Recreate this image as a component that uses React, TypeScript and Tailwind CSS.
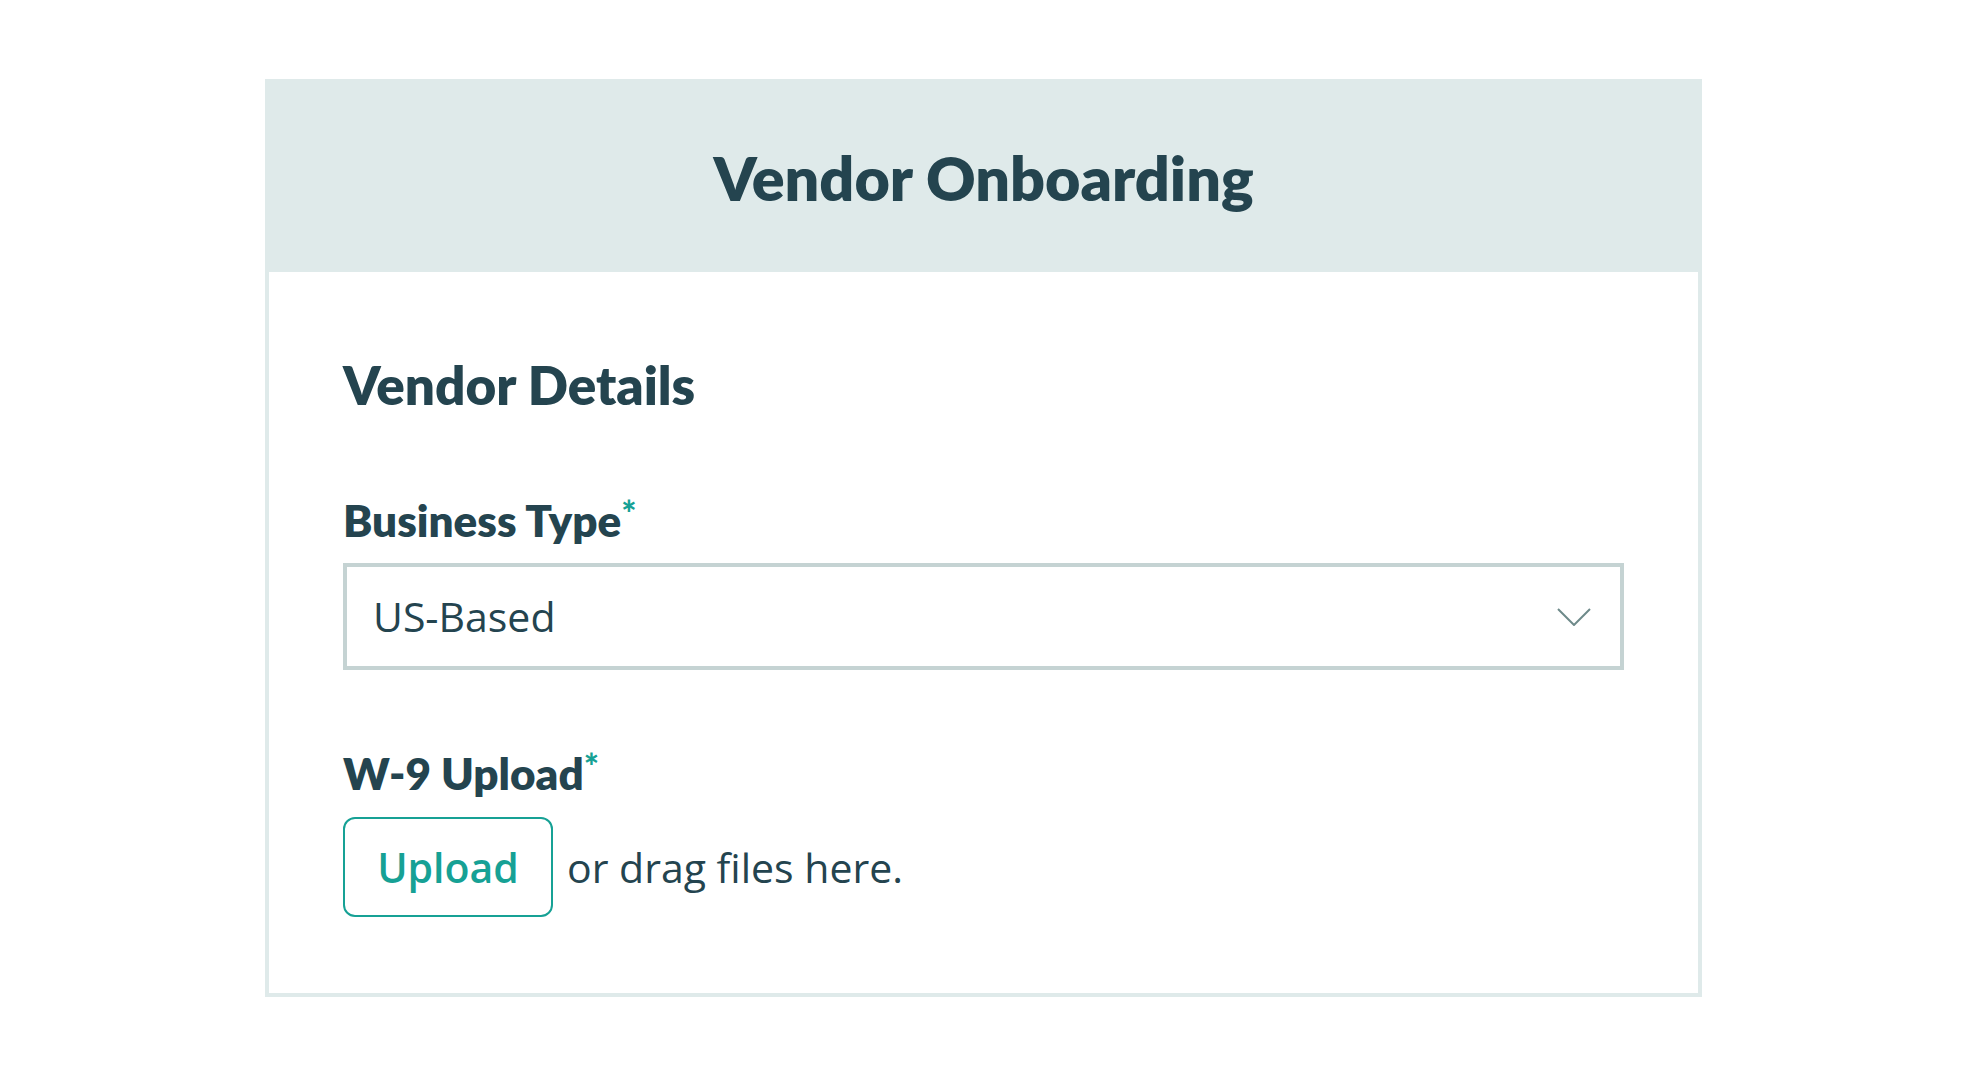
const dark = "text-[#24444f]";

const Label = ({ children }: { children: React.ReactNode }) => (
    <div className={`font-['Lato',sans-serif] text-[44px] font-extrabold leading-none ${dark}`}>
        {children}
        <span className="relative -top-[10px] text-[36px] font-black text-[#16a195]">*</span>
    </div>
);

const App: React.FC = () => {
    return (
        <div className="min-h-screen w-full bg-white pt-[79px]">
            <div className="ml-[265px] w-[1437px] border-4 border-[#dfeaea] bg-white">
                <div className="flex h-[189px] items-center justify-center bg-[#dfeaea]">
                    <h1 className={`font-['Lato',sans-serif] text-[61px] font-extrabold leading-none ${dark}`}>
                        Vendor Onboarding
                    </h1>
                </div>

                <div className="px-[74px] pt-[86px] pb-[76px]">
                    <h2 className={`font-['Lato',sans-serif] text-[53px] font-extrabold leading-none ${dark}`}>
                        Vendor Details
                    </h2>

                    <div className="mt-[87px]">
                        <Label>Business Type</Label>
                        <div className="mt-[21px] flex h-[107px] items-center justify-between border-4 border-[#c5d3d3] pl-[26px] pr-[29px]">
                            <span className={`font-['Open_Sans',sans-serif] text-[41px] leading-none ${dark}`}>
                                US-Based
                            </span>
                            <svg width="34" height="18" viewBox="0 0 34 18" fill="none">
                                <path d="M1 1 L17 17 L33 1" stroke="#6e8a8a" strokeWidth="2" />
                            </svg>
                        </div>
                    </div>

                    <div className="mt-[81px]">
                        <Label>W-9 Upload</Label>
                        <div className="mt-[22px] flex items-center gap-[14px]">
                            <button className="flex h-[100px] w-[210px] items-center justify-center rounded-[12px] border-2 border-[#16a195] bg-white font-['Open_Sans',sans-serif] text-[41px] font-semibold leading-none text-[#16a195]">
                                Upload
                            </button>
                            <span className={`font-['Open_Sans',sans-serif] text-[41px] leading-none ${dark}`}>
                                or drag files here.
                            </span>
                        </div>
                    </div>
                </div>
            </div>
        </div>
    );
};

export default App;
